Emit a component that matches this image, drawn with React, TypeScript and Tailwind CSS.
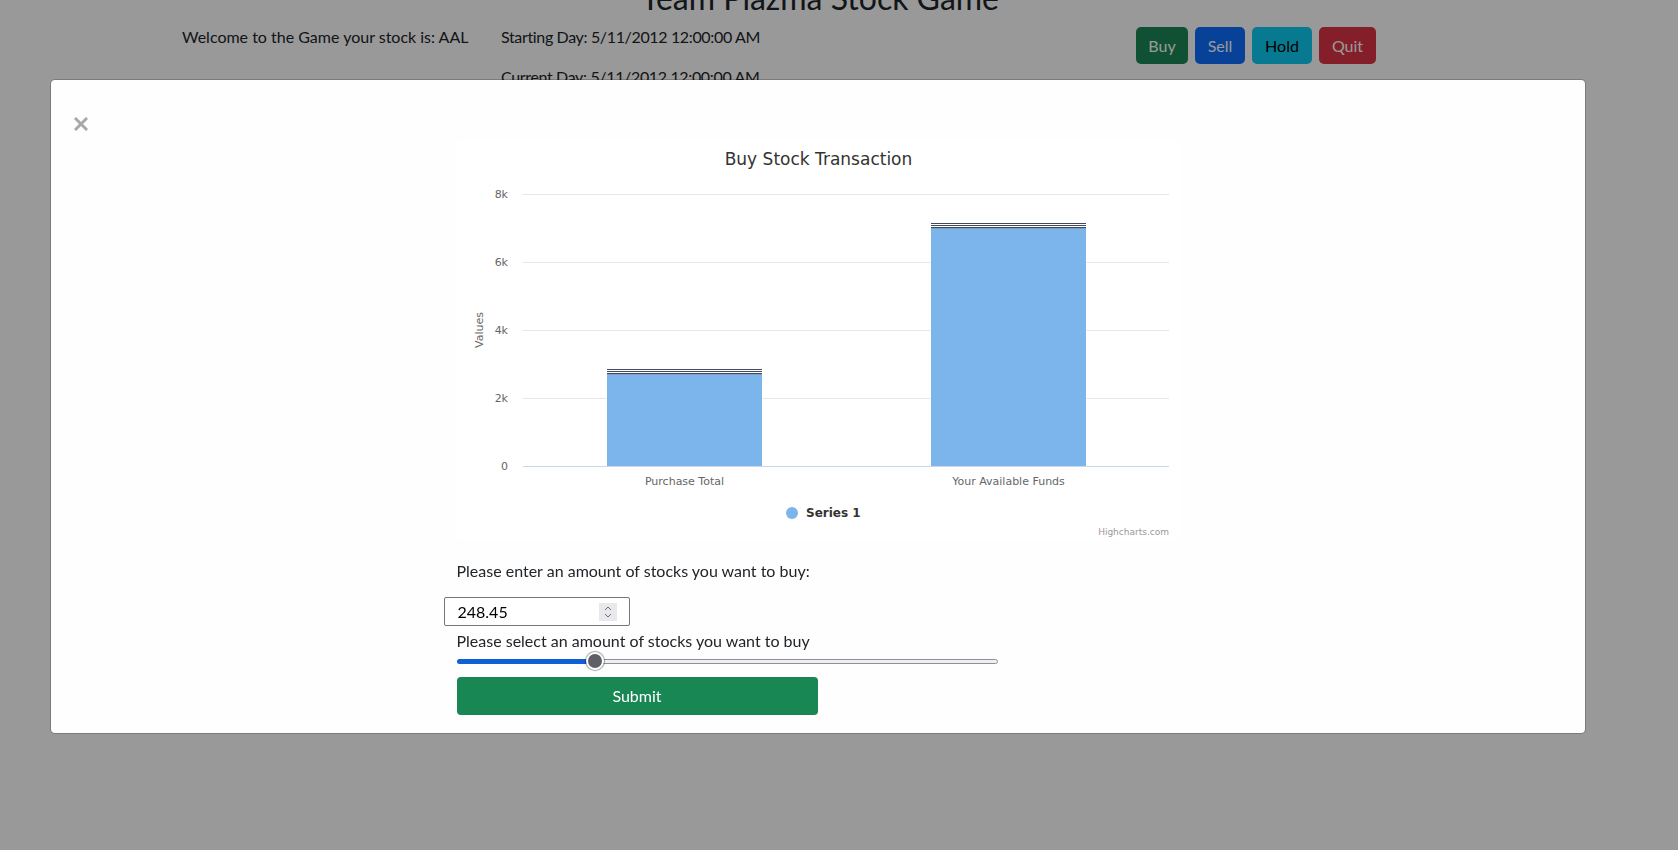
import React from "react";

type Bar = {
    label: string;
    x: number;
    top: number;
};

// chart box is 723 x 400, plot runs from x 66 to 712, zero line at y 326
const ticks = [
    { label: "0", y: 326 },
    { label: "2k", y: 258 },
    { label: "4k", y: 190 },
    { label: "6k", y: 122 },
    { label: "8k", y: 54 }
];

const bars: Bar[] = [
    { label: "Purchase Total", x: 150, top: 229 },
    { label: "Your Available Funds", x: 474, top: 83 }
];

const headerButtons = [
    { name: "Buy", cls: "w-[52px] bg-[#198754] text-white" },
    { name: "Sell", cls: "w-[50px] bg-[#0d6efd] text-white" },
    { name: "Hold", cls: "w-[60px] bg-[#0dcaf0] text-black" },
    { name: "Quit", cls: "w-[57px] bg-[#dc3545] text-white" }
];

const BAR_W = 155;
const ZERO = 326;

const StockChart: React.FC = () => {
    return (
        <svg width={723} height={400} className="block bg-white" style={{ fontFamily: "'DejaVu Sans', 'Liberation Sans', sans-serif" }}>
            {/* Title */}
            <text x={361.5} y={25} textAnchor="middle" fontSize={17} fill="#333333">Buy Stock Transaction</text>

            {/* Grid + y labels */}
            {ticks.map((t) => (
                <g key={t.label}>
                    {t.y !== ZERO && <line x1={66} x2={712} y1={t.y + 0.5} y2={t.y + 0.5} stroke="#e6e6e6" strokeWidth={1} />}
                    <text x={51} y={t.y + 4} textAnchor="end" fontSize={11} fill="#666666">{t.label}</text>
                </g>
            ))}
            <text x={26} y={190} textAnchor="middle" fontSize={11} fill="#666666" transform="rotate(-90 26 190)">Values</text>

            {/* Bars with the thin stacked series on top */}
            {bars.map((b) => (
                <g key={b.label}>
                    <rect x={b.x - 0.5} y={b.top - 0.5} width={BAR_W + 1} height={ZERO - b.top + 1} fill="#ffffff" />
                    <rect x={b.x} y={b.top} width={BAR_W} height={1} fill="#3f4a5e" />
                    <rect x={b.x} y={b.top + 2} width={BAR_W} height={1} fill="#3f4a5e" />
                    <rect x={b.x} y={b.top + 4} width={BAR_W} height={1.6} fill="#3f4a5e" />
                    <rect x={b.x} y={b.top + 5.6} width={BAR_W} height={ZERO - b.top - 5.6} fill="#7cb5ec" />
                    <text x={b.x + BAR_W / 2} y={345} textAnchor="middle" fontSize={11} fill="#666666">{b.label}</text>
                </g>
            ))}

            {/* x axis */}
            <line x1={66} x2={712} y1={ZERO + 0.5} y2={ZERO + 0.5} stroke="#ccd6eb" strokeWidth={1} />

            {/* Legend */}
            <circle cx={335} cy={373} r={6} fill="#7cb5ec" />
            <text x={349} y={377} fontSize={12} fontWeight="bold" fill="#333333">Series 1</text>

            {/* Credits */}
            <text x={712} y={395} textAnchor="end" fontSize={9} fill="#999999">Highcharts.com</text>
        </svg>
    );
}

const App: React.FC = () => {
    return (
        <div className="relative min-h-[850px] w-full overflow-hidden bg-white font-['Lato','Segoe_UI',sans-serif] text-[16px] text-[#212529]">
            {/* Page header behind the modal */}
            <div className="w-[1640px]">
                <h2 className="-mt-[21px] mb-2 text-center text-[32px] leading-[1.2]">Team Plazma Stock Game</h2>
                <div className="flex items-start">
                    <p className="ml-[182px] w-[319px] shrink-0 leading-6">Welcome to the Game your stock is: AAL</p>
                    <div className="w-[635px] shrink-0 tracking-[-0.35px]">
                        <p className="mb-4 leading-6">Starting Day: 5/11/2012 12:00:00 AM</p>
                        <p className="leading-6">Current Day: 5/11/2012 12:00:00 AM</p>
                    </div>
                    <div className="mt-[2px] flex gap-[7px]">
                        {headerButtons.map((b) => (
                            <button key={b.name} className={`h-[37px] rounded-[5px] text-center leading-6 ${b.cls}`}>{b.name}</button>
                        ))}
                    </div>
                </div>
            </div>

            {/* Backdrop + modal */}
            <div className="fixed inset-0 bg-black/40">
                <div className="ml-[50px] mt-[79px] w-[1536px] rounded-[5px] border border-black/20 bg-[#fefefe] bg-clip-padding pb-[18px] pt-[37px]">
                    {/* Close */}
                    <button className="ml-[23px] block h-[14px] w-[14px]" aria-label="Close">
                        <svg width={14} height={14} viewBox="0 0 14 14">
                            <path d="M2 2 L12 12 M12 2 L2 12" stroke="#a9a9a9" strokeWidth={3} strokeLinecap="square" />
                        </svg>
                    </button>

                    <div className="mx-auto mt-[9px] w-[723px]">
                        <StockChart />

                        <p className="mt-[19px] leading-6">Please enter an amount of stocks you want to buy:</p>

                        {/* Number input */}
                        <div className="-ml-[13px] mt-[14px] flex h-[29px] w-[186px] items-center justify-between rounded-[2px] border border-[#767676] bg-white pl-[13px] pr-[12px] text-black">
                            <span className="leading-6">248.45</span>
                            <span className="flex h-[18px] w-[18px] flex-col items-center justify-center bg-[#e9e9ed]">
                                <svg width={8} height={14} viewBox="0 0 8 14">
                                    <path d="M1 5 L4 2 L7 5 M1 9 L4 12 L7 9" fill="none" stroke="#6b6b6b" strokeWidth={1} />
                                </svg>
                            </span>
                        </div>

                        <p className="mt-[3px] leading-6">Please select an amount of stocks you want to buy</p>

                        {/* Range slider */}
                        <div className="relative flex h-[16px] w-[541px] items-center" role="slider" aria-valuenow={248.45}>
                            <div className="h-[5px] w-[138px] rounded-l-full bg-[#0f5fd7]" />
                            <div className="h-[5px] flex-1 rounded-r-full border border-[#8f8f9d] bg-[#efefef]" />
                            <div className="absolute left-[129px] top-[-1px] h-[18px] w-[18px] rounded-full border-2 border-white bg-[#5f5f68] shadow-[0_0_1px_1px_rgba(0,0,0,0.35)]" />
                        </div>

                        <button className="mt-[8px] block h-[38px] w-[361px] rounded-[4px] bg-[#198754] text-center leading-6 text-white">Submit</button>
                    </div>
                </div>
            </div>
        </div>
    );
}

export default App;
